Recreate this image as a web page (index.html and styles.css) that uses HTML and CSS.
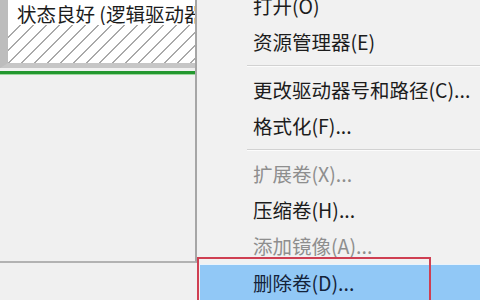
FILE: index.html
```html
<!DOCTYPE html>
<html lang="zh-CN">
  <head>
    <meta charset="UTF-8" />
    <title>删除卷</title>
    <link rel="stylesheet" href="styles.css">
  </head>
  <body>
    <div class="screen">
      <!-- Disk map on the left -->
      <div class="disk-pane">
        <div class="volume">
          <div class="volume-label">状态良好 (逻辑驱动器)</div>
          <div class="volume-hatch"></div>
        </div>
        <div class="volume-bar"></div>
      </div>

      <!-- Context menu -->
      <ul class="menu">
        <li class="item">打开(O)</li>
        <li class="item">资源管理器(E)</li>
        <li class="sep"></li>
        <li class="item">更改驱动器号和路径(C)...</li>
        <li class="item">格式化(F)...</li>
        <li class="sep"></li>
        <li class="item disabled">扩展卷(X)...</li>
        <li class="item">压缩卷(H)...</li>
        <li class="item disabled">添加镜像(A)...</li>
        <li class="item selected">删除卷(D)...</li>
      </ul>

      <div class="mark"></div>
    </div>
  </body>
</html>
```

FILE: styles.css
```css
* {
  margin: 0;
  padding: 0;
  box-sizing: border-box;
}

html,
body {
  width: 480px;
  height: 300px;
  overflow: hidden;
  background-color: #f0f0f0;
  font-family: "Noto Sans CJK SC", "Noto Sans", sans-serif;
  font-size: 19.5px;
  color: #1c1c1c;
}

.screen {
  position: relative;
  display: flex;
  height: 300px;
}

/* left side */
.disk-pane {
  flex: 0 0 197px;
  width: 197px;
  min-width: 0;
  overflow: hidden;
  height: 263px;
  border-right: 2px solid #a6a6a6;
  border-bottom: 2px solid #b2b2b2;
}

.volume {
  display: flex;
  flex-direction: column;
  height: 68px;
  border-left: 8px solid #bdbdbd;
  border-bottom: 5px solid #c6c6c6;
  background-color: #fff;
}

.volume-label {
  height: 25px;
  padding: 2px 0 0 9px;
  line-height: 24px;
  white-space: nowrap;
  overflow: hidden;
  background-color: #fff;
}

.volume-hatch {
  flex: 1;
  background-image: repeating-linear-gradient(
    135deg,
    transparent 0,
    transparent 8px,
    #a9a9a9 8px,
    #a9a9a9 9.2px
  );
}

.volume-bar {
  height: 4px;
  margin-top: 3px;
  background-color: #22972e;
  border-bottom: 1px solid #9ad69c;
}

/* menu */
.menu {
  flex: 1;
  min-width: 0;
  list-style: none;
  margin-top: -12px;
  background-color: #f1f1f1;
}

.item {
  height: 36px;
  line-height: 36px;
  padding-left: 56px;
  white-space: nowrap;
}

.item.disabled {
  color: #8e8e8e;
}

.item.selected {
  margin-left: 3px;
  padding-left: 53px;
  background-color: #91c8f6;
  border-top: 1px solid #e9f3fc;
  color: #14233a;
}

.sep {
  height: 12px;
  margin-left: 50px;
  display: flex;
  flex-direction: column;
  justify-content: center;
}

.sep::before {
  content: "";
  display: block;
  height: 1px;
  background-color: #d2d2d2;
  border-bottom: 1px solid #fcfcfc;
  box-sizing: content-box;
}

/* red annotation box */
.mark {
  position: absolute;
  left: 197px;
  top: 257px;
  width: 234px;
  height: 50px;
  border: 2px solid #cf3f52;
}
```
